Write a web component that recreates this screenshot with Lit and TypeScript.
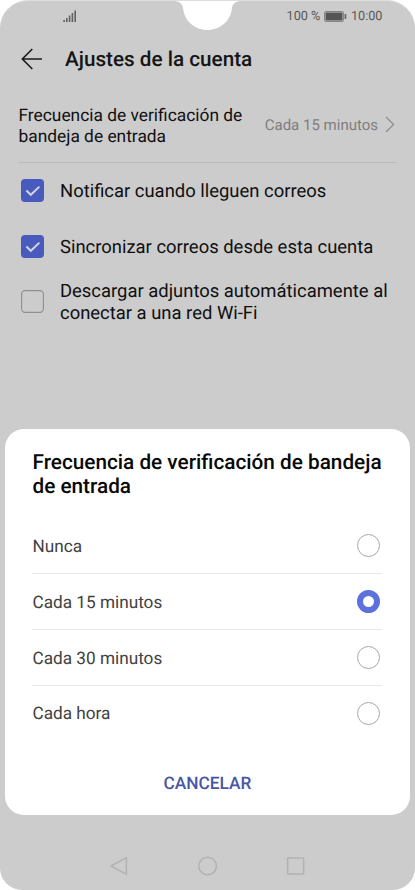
import { LitElement, html, css, svg } from "lit";
import { customElement, property, state } from "lit/decorators.js";
import { classMap } from "lit/directives/class-map.js";

@customElement("check-row")
class CheckRow extends LitElement {
  @property({ type: Boolean }) checked = false;

  static styles = css`
    :host { display: flex; align-items: center; height: 55.5px; padding-left: 20.7px; }
    svg { width: 23px; height: 23px; flex: none; margin-right: 16.3px; }
    .label { padding-top: 3.4px; font-size: 18.43px; line-height: 22px; color: #101010; white-space: nowrap; }
  `;

  render() {
    return html`
      <svg viewBox="0 0 23 23" fill="none">
        ${this.checked
          ? svg`<rect x="0" y="0" width="23" height="23" rx="4" fill="#485abb"/>
              <path d="M5.4 11.5 9.8 15.8 18.4 7.6" stroke="#d2d5e5" stroke-width="2"/>`
          : svg`<rect x=".6" y=".6" width="21.8" height="21.8" rx="3.6" stroke="#8f8f8f" stroke-width="1.1"/>`}
      </svg>
      <div class="label"><slot></slot></div>
    `;
  }
}

@customElement("app-root")
class AppRoot extends LitElement {
  @state() selected = 1;
  options = ["Nunca", "Cada 15 minutos", "Cada 30 minutos", "Cada hora"];

  static styles = css`
    :host {
      display: block; width: 415px; height: 890px; background: #fff;
      font-family: Roboto, sans-serif; text-rendering: geometricPrecision;
    }
    * { box-sizing: border-box; }
    .screen {
      position: relative; display: flex; flex-direction: column; width: 415px; height: 890px;
      overflow: hidden; background: #ccc; border-radius: 28px 28px 22px 22px; border-top: 1px solid #dedede;
    }
    .notch { position: absolute; left: 173px; top: -1px; width: 69px; height: 31px; }
    .status {
      display: flex; align-items: center; height: 31px; padding: 0 32.5px 1px 63px;
      font-size: 12.7px; color: #575757;
    }
    .signal { width: 14px; height: 13px; margin-right: auto; }
    .battery { width: 23px; height: 11px; margin: 0 4px 0 3.5px; }
    .header { display: flex; align-items: center; height: 54px; padding-left: 21px; }
    .back { width: 22px; height: 22px; margin-right: 22px; }
    .title { padding-top: 1px; font-size: 20.7px; font-weight: 500; color: #151515; }
    .frequency {
      display: flex; align-items: center; height: 77px; margin: 0 19px 0 18.5px;
      border-bottom: 1px solid #b9b9b9;
    }
    .name { padding-top: 5px; font-size: 17.35px; line-height: 20.3px; color: #101010; white-space: nowrap; }
    .value { margin-left: auto; padding-top: 2.4px; font-size: 15px; color: #7e7e7e; white-space: nowrap; }
    .chevron { width: 10px; height: 17px; margin: 0 1px 0 7px; }
    .dialog {
      position: absolute; left: 4.7px; top: 427.5px; width: 405.8px; height: 386px;
      padding: 22.5px 28px 0 27.8px; border-radius: 19px; background: #fff;
    }
    .dialog-title { font-size: 20.75px; font-weight: 500; line-height: 24.3px; color: #080808; white-space: nowrap; }
    .options { margin-top: 18.7px; }
    .option {
      display: flex; align-items: center; justify-content: space-between; height: 55.8px;
      padding-right: 2px; font-size: 17.2px; color: #414141; border-bottom: 1px solid #e6e6e6;
    }
    .option:last-child { border-bottom-color: transparent; }
    .caption { padding-top: 2.8px; }
    .radio { width: 23px; height: 23px; border: 1px solid #a9a9a9; border-radius: 50%; }
    .radio.on { border: 6px solid #5c70de; }
    .cancel { margin-top: 32.6px; text-align: center; font-size: 17.3px; line-height: 20px; font-weight: 500; color: #4857a5; }
    .nav { display: flex; justify-content: center; gap: 68px; height: 20px; margin-top: auto; margin-bottom: 14px; }
    .nav svg { width: 20px; height: 20px; }
  `;

  render() {
    return html`
      <div class="screen">
        <svg class="notch" viewBox="0 0 69 31">
          <path d="M0 0V1C6 1 9.8 3.5 10.2 9C11.5 21 22 30 34.5 30S57.5 21 58.8 9C59.2 3.5 63 1 69 1V0Z" fill="#fff"/>
        </svg>
        <div class="status">
          <svg class="signal" viewBox="0 0 14 13" fill="#626262">
            <rect x=".3" y="10" width="1.6" height="2"/><rect x="3" y="8" width="1.6" height="4"/>
            <rect x="5.8" y="5.5" width="1.6" height="6.5"/><rect x="8.6" y="3" width="1.6" height="9"/>
            <rect x="11.4" y=".5" width="1.6" height="11.5"/>
          </svg>
          <span>100 %</span>
          <svg class="battery" viewBox="0 0 23 11">
            <rect x=".5" y=".5" width="19" height="10" rx="1.3" fill="none" stroke="#858585" stroke-width="1"/>
            <rect x="1.5" y="1.5" width="17" height="8" fill="#555"/>
            <rect x="20.6" y="3" width="1.7" height="5" rx=".6" fill="#666"/>
          </svg>
          <span>10:00</span>
        </div>
        <div class="header">
          <svg class="back" viewBox="0 0 22 22" fill="none" stroke="#1b1b1b" stroke-width="1.6">
            <path d="M21 11H1.6M11.3 1 1.3 11l10 10"/>
          </svg>
          <div class="title">Ajustes de la cuenta</div>
        </div>
        <div class="frequency">
          <div class="name">Frecuencia de verificación de<br />bandeja de entrada</div>
          <div class="value">Cada 15 minutos</div>
          <svg class="chevron" viewBox="0 0 10 17" fill="none" stroke="#8c8c8c" stroke-width="1.2">
            <path d="M1 1l7.6 7.5L1 16"/>
          </svg>
        </div>
        <check-row checked>Notificar cuando lleguen correos</check-row>
        <check-row checked>Sincronizar correos desde esta cuenta</check-row>
        <check-row>Descargar adjuntos automáticamente al<br />conectar a una red Wi-Fi</check-row>
        <div class="nav">
          <svg viewBox="0 0 20 20" fill="none" stroke="#b2b2b2" stroke-width="1.5" stroke-linejoin="round"><path d="M16.4 1.6V18.4L1 10Z"/></svg>
          <svg viewBox="0 0 20 20" fill="none" stroke="#b2b2b2" stroke-width="1.5"><circle cx="9.6" cy="10" r="8.8"/></svg>
          <svg viewBox="0 0 20 20" fill="none" stroke="#b2b2b2" stroke-width="1.5"><rect x="1.6" y="2" width="16" height="16" rx=".6"/></svg>
        </div>
        <div class="dialog">
          <div class="dialog-title">Frecuencia de verificación de bandeja<br />de entrada</div>
          <div class="options">
            ${this.options.map((label, i) => html`
              <div class="option" @click=${() => (this.selected = i)}>
                <span class="caption">${label}</span>
                <span class=${classMap({ radio: true, on: i === this.selected })}></span>
              </div>`)}
          </div>
          <div class="cancel">CANCELAR</div>
        </div>
      </div>
    `;
  }
}
